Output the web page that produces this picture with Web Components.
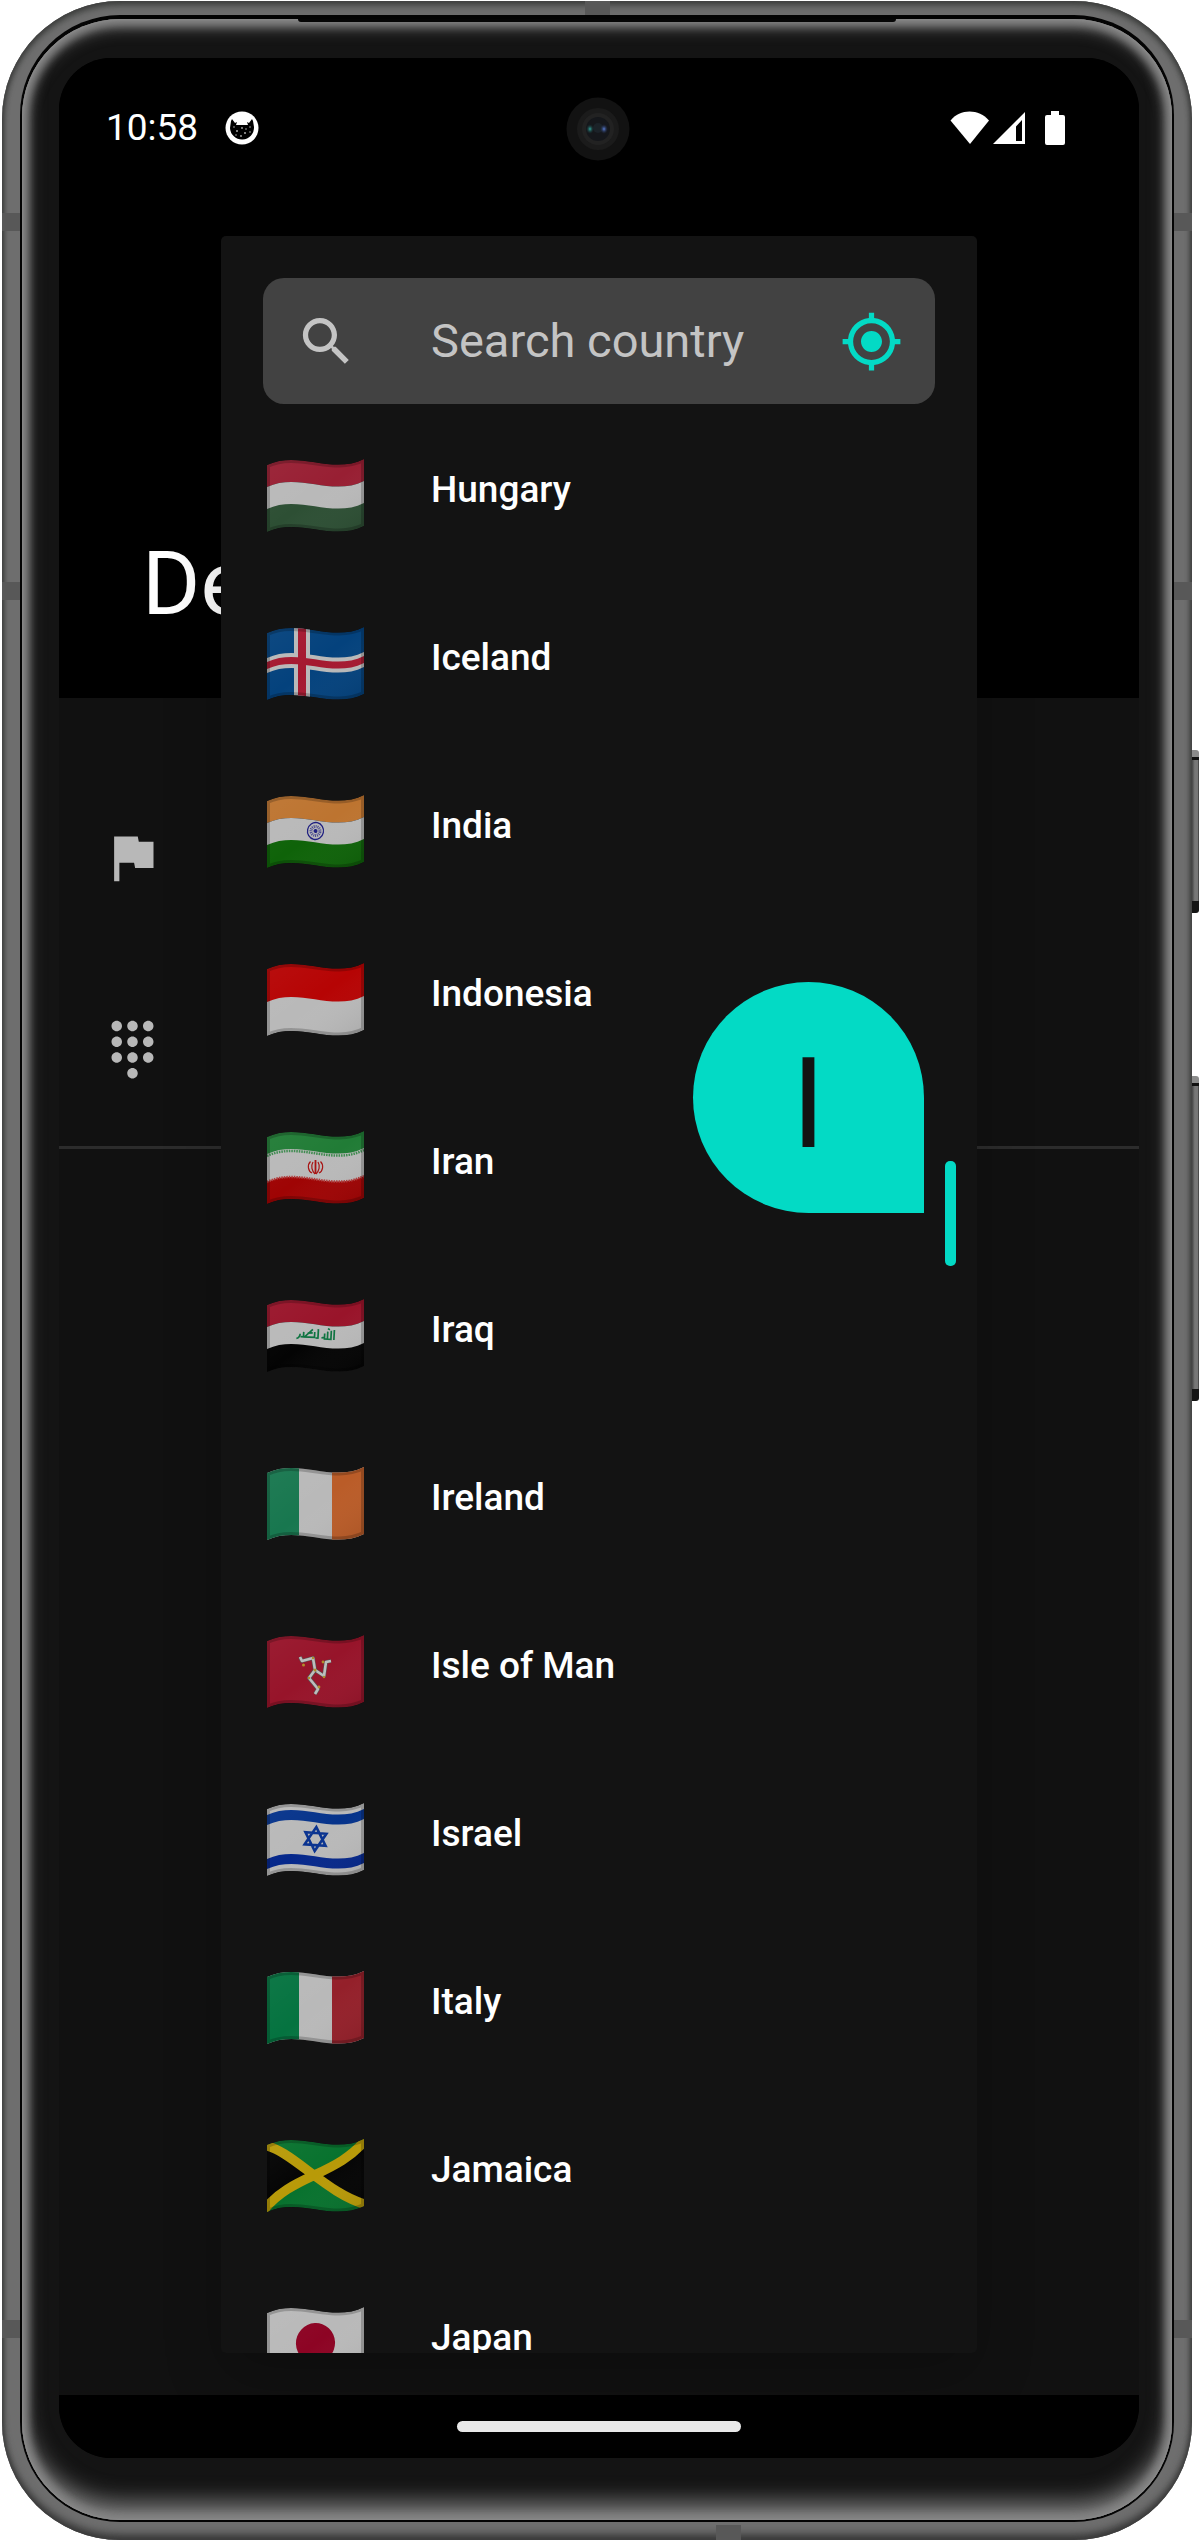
<!DOCTYPE html>
<html lang="en">
<head>
<meta charset="utf-8">
<meta name="viewport" content="width=device-width, initial-scale=1">
<title>Country picker</title>
<style>
  body { margin: 0; background: #fff; font-family: Roboto, "Noto Sans", sans-serif; color: #fff; }
</style>
</head>
<body>
<phone-frame>
  <app-screen></app-screen>
  <country-dialog></country-dialog>
</phone-frame>

<script>
const define = (name, html, init) => customElements.define(name, class extends HTMLElement {
  constructor() {
    super();
    this.attachShadow({ mode: "open" });
  }
  connectedCallback() {
    this.shadowRoot.innerHTML = html;
    if (init) init.call(this, this.shadowRoot);
  }
});

/* Device body: metal rim, black seam, glass bezel, screen */
define("phone-frame", `
<style>
  :host { display: block; height: 100vh; box-sizing: border-box; padding: 1px 8px 1px 2px; position: relative; }
  * { box-sizing: border-box; }
  .metal { height: 100%; padding: 14px 18px 18px; border-radius: 118px; position: relative;
    background: #6e6e6e;
    box-shadow: inset 0 0 5px 1px #3a3a3a, inset 0 -8px 8px -2px #3c3c3c, inset 0 5px 6px #4a4c4a; }
  .seam { height: 100%; padding: 4px 2px 2px; background: #040404; border-radius: 100px; position: relative; }
  .bezel { height: 100%; padding: 39px 33px 62px 37px; border-radius: 98px; background: #141414; position: relative;
    box-shadow: inset 0 0 2px 1px #8a8a8a, inset 0 0 9px 6px #858585, inset 0 8px 16px #6f6f6f, inset 0 -18px 22px #7a7a7a; }
  .earpiece { position: absolute; top: 0; left: 24%; right: 24%; height: 3px; background: #060606; border-radius: 0 0 3px 3px; }
  .screen { height: 100%; position: relative; overflow: hidden; border-radius: 52px; background: #000; }
  .band { position: absolute; background: #585858; }
  .side { width: 18px; height: 18px; }
  .l { left: 0; } .r { right: 0; }
  .end { height: 15px; width: 25px; }
  .key { position: absolute; right: 1px; width: 7px; border-radius: 0 3px 3px 0;
    background: linear-gradient(#8b8b8b 7px, #111 7px, #111 10px, transparent 10px, transparent calc(100% - 12px), #151515 calc(100% - 12px)),
      linear-gradient(90deg, #444, #777 40%, #777 80%, #333); }
  .camera { position: absolute; top: 39px; left: 50%; width: 64px; height: 64px; margin-left: -33px; }
</style>
<div class="metal">
  <div class="band side l" style="top:212px"></div>
  <div class="band side l" style="top:581px"></div>
  <div class="band side l" style="bottom:202px"></div>
  <div class="band side r" style="top:212px"></div>
  <div class="band side r" style="top:581px"></div>
  <div class="band side r" style="bottom:202px"></div>
  <div class="band end" style="top:0;left:49%"></div>
  <div class="band end" style="bottom:0;left:60%"></div>
  <div class="seam">
    <div class="bezel">
      <div class="earpiece"></div>
      <div class="screen">
        <slot></slot>
        <svg class="camera" viewBox="0 0 64 64" aria-hidden="true">
          <defs>
            <radialGradient id="a"><stop offset="0" stop-color="#2fa79e"/><stop offset="1" stop-color="#1a2a2c" stop-opacity="0"/></radialGradient>
            <radialGradient id="b"><stop offset="0" stop-color="#5a7fd8"/><stop offset="1" stop-color="#1c2440" stop-opacity="0"/></radialGradient>
          </defs>
          <circle cx="32" cy="32" r="31.500" fill="#121212"/>
          <circle cx="32" cy="32" r="21" fill="#1b1b1b"/>
          <circle cx="32" cy="32" r="16" fill="#222"/>
          <circle cx="32" cy="32" r="12" fill="#15171b"/>
          <circle cx="32" cy="31" r="5" fill="#1b2228"/>
          <ellipse cx="24" cy="32" rx="4" ry="5" fill="url(#a)"/>
          <ellipse cx="38" cy="32" rx="4" ry="5" fill="url(#b)"/>
        </svg>
      </div>
    </div>
  </div>
</div>
<div class="key" style="top:750px;height:163px"></div>
<div class="key" style="top:1076px;height:325px"></div>
`);

/* System status bar */
define("status-bar", `
<style>
  :host { display: flex; align-items: center; height: 140px; padding: 0 74px 0 47px; flex: none; }
  time { font-size: 37px; line-height: 44px; margin-right: 27px; }
  svg { display: block; fill: #fff; }
  .sys { margin-left: auto; display: flex; align-items: center; }
</style>
<time>10:58</time>
<svg width="34" height="34" viewBox="0 0 34 34" role="img" aria-label="Notification">
  <circle cx="17" cy="17" r="16.500"/>
  <path fill="#000" d="M6 10L7 8L10 12L12 11L11 14H23L22 11L24 12L27 8L28 10L29 16A12 12 0 0 1 5 17Z"/>
  <g fill="#aaa"><circle cx="9" cy="16" r=".8"/><circle cx="17" cy="17" r=".9"/><circle cx="25" cy="16" r=".8"/><circle cx="12" cy="20" r="1"/><circle cx="20" cy="22" r="1"/><circle cx="16" cy="25" r=".9"/><circle cx="25" cy="21" r=".8"/><circle cx="11" cy="24" r=".8"/><circle cx="21" cy="18" r=".8"/></g>
</svg>
<div class="sys">
  <svg width="117" height="34" viewBox="0 0 117 34" role="img" aria-label="Wi-Fi, signal and battery">
    <path d="M2.500 9.500C12-2.500 31-2.500 41 9.500L22 33Z"/>
    <path fill-rule="evenodd" d="M45 33L77 1V33ZM68 15.500V30H74V9Z"/>
    <path d="M103 0H111V4H115Q117 4 117 6V32Q117 34 115 34H99Q97 34 97 32V6Q97 4 99 4H103Z"/>
  </svg>
</div>
`);

/* Page beneath the dialog */
define("app-screen", `
<style>
  :host { display: flex; flex-direction: column; height: 100%; }
  header { height: 640px; background: #000; display: flex; flex-direction: column; flex: none; }
  h1 { margin: auto 0 0; padding: 0 83px 62px; font-size: 89px; line-height: 104px; font-weight: 400; }
  main { flex: 1; background: #111; }
  .fields { display: flex; flex-direction: column; gap: 129px; padding: 128px 42px 65px; border-bottom: 3px solid #2c2c2c; }
  svg { display: block; width: 63px; height: 63px; fill: #b8b8b8; }
  footer { flex: none; height: 63px; background: #000; display: flex; align-items: center; justify-content: center; position: relative; z-index: 2; }
  .pill { width: 284px; height: 11px; border-radius: 6px; background: #e8e8e8; }
  @media (max-width: 700px) { .pill { width: 40%; } }
</style>
<header><status-bar></status-bar><h1>De</h1></header>
<main>
  <div class="fields">
    <svg viewBox="0 0 24 24" role="img" aria-label="Country"><path d="M14.400 6L14 4H5v17h2v-7h5.600l.4 2h7V6z"/></svg>
    <svg viewBox="0 0 24 24" role="img" aria-label="Phone number"><path d="M12 19c-1.100 0-2 .9-2 2s.9 2 2 2 2-.9 2-2-.9-2-2-2zM6 1c-1.100 0-2 .9-2 2s.9 2 2 2 2-.9 2-2-.9-2-2-2zm0 6c-1.100 0-2 .9-2 2s.9 2 2 2 2-.9 2-2-.9-2-2-2zm0 6c-1.100 0-2 .9-2 2s.9 2 2 2 2-.9 2-2-.9-2-2-2zm12-8c1.100 0 2-.9 2-2s-.9-2-2-2-2 .9-2 2 .9 2 2 2zm-6 8c-1.100 0-2 .9-2 2s.9 2 2 2 2-.9 2-2-.9-2-2-2zm6 0c-1.100 0-2 .9-2 2s.9 2 2 2 2-.9 2-2-.9-2-2-2zm0-6c-1.100 0-2 .9-2 2s.9 2 2 2 2-.9 2-2-.9-2-2-2zm-6 0c-1.100 0-2 .9-2 2s.9 2 2 2 2-.9 2-2-.9-2-2-2zm0-6c-1.100 0-2 .9-2 2s.9 2 2 2 2-.9 2-2-.9-2-2-2z"/></svg>
  </div>
</main>
<footer><div class="pill"></div></footer>
`);

/* Waving flags: every horizontal band follows the same wave */
const wave = (a, b, fill) => `<path fill="${fill}" d="M0 ${a + 6}C32 ${a - 9} 65 ${a + 16} 97 ${a}V${b}C65 ${b + 16} 32 ${b - 9} 0 ${b + 6}Z"/>`;
const bars = (l, c, r) => `<path fill="${c}" d="M0 0H97V73H0Z"/><path fill="${l}" d="M0 0H32V73H0Z"/><path fill="${r}" d="M65 0H97V73H65Z"/>`;
const W = "#b9b9b9";
const leg = d => `<path d="${d}" fill="none" stroke="#555" stroke-width="3.800" stroke-linejoin="round"/><path d="${d}" fill="none" stroke="#bdbdbd" stroke-width="2.600" stroke-linejoin="round"/>`;
const flags = {
  hu: wave(0, 22, "#981f33") + wave(22, 45, W) + wave(44, 67, "#2d4f34"),
  is: wave(0, 67, "#04427d") + wave(25, 40, W) + `<path fill="${W}" d="M27 0H43V73H27Z"/>` + wave(29, 36, "#a51930") + `<path fill="#a51930" d="M31 0H39V73H31Z"/>`,
  in: wave(0, 22, "#bd7430") + wave(22, 45, W) + wave(44, 67, "#0f6309") +
    `<g transform="rotate(12 48.500 36)"><ellipse cx="48.500" cy="36" rx="8" ry="8.500" fill="none" stroke="#1f1f80" stroke-width="1.300"/><circle cx="48.500" cy="36" r="4.500" fill="none" stroke="#1f1f80" stroke-width="3" stroke-dasharray="1 .8" opacity=".7"/><circle cx="48.500" cy="36" r="2" fill="#1f1f80"/></g>`,
  id: wave(0, 34, "#b60404") + wave(33, 67, W),
  ir: wave(0, 19, "#217c36") + wave(17, 49, W) + wave(45, 67, "#9f0404") +
    `<path d="M0 25C32 10 65 35 97 19" fill="none" stroke="#3d8a4e" stroke-width="2.500" stroke-dasharray="1.500 1"/><path d="M0 51C32 36 65 61 97 45" fill="none" stroke="#b03a3a" stroke-width="2.500" stroke-dasharray="1.500 1"/>
    <g fill="none" stroke="#a81414" stroke-width="1.200"><path stroke-width="1.800" d="M48.500 29V43"/><path d="M43.500 30.500C40 34 41 40 45 42M53.500 30.500C57 34 56 40 52 42M46 31C43.500 35 45 40 48 43M51 31C53.500 35 52 40 49 43"/></g>`,
  iq: wave(0, 22, "#99142a") + wave(22, 45, W) + wave(44, 67, "#040404") +
    `<g transform="translate(30 28) rotate(3)" fill="none" stroke="#0e7340" stroke-width="1.700"><path d="M37.500 1V11M34.500 2V10.500H28V5M31 3V10M28 9L25 9.500M33 1L31 0"/><path d="M21.500 1V10.500M22 10H19M18 4V9.500H8L16 1.500M11 5.500L16 5M7 4.500V9.500H4M3.500 6.500Q3.500 10 0 11.500"/></g>`,
  ie: bars("#18774f", W, "#ba5c28"),
  im: wave(0, 67, "#97142a") +
    leg("M48 35L46 23L35 26L33 22") + leg("M48 35L57 41L59 27L64 26") + leg("M48 35L42 43L51 54L48 59") +
    `<g fill="#b08d2a"><circle cx="36.500" cy="30" r="1.500"/><circle cx="56" cy="27" r="1.400"/><circle cx="52" cy="52" r="1.400"/><circle cx="42" cy="43" r="1.200"/><circle cx="57" cy="42" r="1.200"/><circle cx="46" cy="23" r="1.200"/><circle cx="48" cy="35" r="1.500"/></g>`,
  il: wave(0, 67, W) + wave(6, 16, "#06338b") + wave(50, 60, "#06288b") +
    `<path transform="rotate(4 48 36)" d="M48.500 24L59 42H38ZM48.500 48L59 30H38Z" fill="none" stroke="#0a3390" stroke-width="2.600"/>`,
  it: bars("#057340", W, "#94202a"),
  jm: wave(0, 67, "#08722e") + `<path fill="#040404" d="M0 10Q20 17 43 37Q20 46 0 66ZM97 6Q78 27 53 37Q78 58 97 62Z"/>
    <path fill="none" stroke="#b89a08" stroke-width="9.500" d="M-4 6C24 10 60 56 101 66M-4 72C26 34 70 38 101 -2"/>`,
  jp: wave(0, 67, W) + `<ellipse cx="48.500" cy="36" rx="19.500" ry="20" fill="#8d0424" transform="rotate(20 48.500 36)"/>`
};

/* One selectable country */
define("country-row", `
<style>
  :host { display: block; }
  button { all: unset; box-sizing: border-box; display: flex; align-items: flex-start; width: 100%; height: 168px;
    padding: 55px 42px 0 46px; gap: 67px; cursor: pointer; }
  svg { display: block; flex: none; width: 97px; height: 73px; }
  span { font-size: 37px; line-height: 62px; font-weight: 500; }
</style>
<button type="button"><svg viewBox="0 0 97 73" aria-hidden="true"></svg><span><slot></slot></span></button>
`, function (root) {
  root.querySelector("svg").innerHTML = `
    <defs>
      <clipPath id="c"><path d="M0 6C32 -9 65 16 97 0V67C65 83 32 58 0 73Z"/></clipPath>
      <linearGradient id="g" x2="1" y2="1"><stop offset="0" stop-color="#fff" stop-opacity=".04"/><stop offset=".5" stop-color="#fff" stop-opacity="0"/><stop offset="1" stop-opacity=".08"/></linearGradient>
    </defs>
    <g clip-path="url(#c)">${flags[this.getAttribute("code")]}
      <path fill="url(#g)" d="M0 0H97V73H0Z"/>
      <path d="M0 6C32 -9 65 16 97 0V67C65 83 32 58 0 73Z" fill="none" stroke="#000" stroke-opacity=".2" stroke-width="6"/>
    </g>`;
});

/* Search box with locate action */
define("search-field", `
<style>
  :host { display: flex; align-items: center; height: 126px; flex: none; margin: 0 42px; padding: 0 32px;
    box-sizing: border-box; border-radius: 21px; background: #424242; }
  svg { display: block; width: 63px; height: 63px; flex: none; }
  label { margin-right: 73px; fill: #c4c4c4; }
  input { all: unset; flex: 1; min-width: 0; font: 400 47px/56px Roboto, "Noto Sans", sans-serif; color: #fff; }
  input::placeholder { color: #c4c4c4; opacity: 1; }
  button { all: unset; cursor: pointer; fill: #03dac5; }
</style>
<label for="q" aria-label="Search"><svg viewBox="0 0 24 24"><path d="M15.500 14h-.79l-.28-.27C15.410 12.590 16 11.110 16 9.500 16 5.910 13.090 3 9.500 3S3 5.910 3 9.500 5.910 16 9.500 16c1.610 0 3.090-.59 4.230-1.570l.27.28v.79l5 4.990L20.490 19l-4.990-5zm-6 0C7.010 14 5 11.990 5 9.500S7.010 5 9.500 5 14 7.010 14 9.500 11.990 14 9.500 14z"/></svg></label>
<input id="q" type="text" placeholder="Search country">
<button type="button" aria-label="Use my location"><svg viewBox="0 0 24 24"><path d="M12 8c-2.210 0-4 1.790-4 4s1.790 4 4 4 4-1.790 4-4-1.790-4-4-4zm8.940 3c-.46-4.170-3.770-7.480-7.940-7.940V1h-2v2.060C6.830 3.520 3.520 6.830 3.060 11H1v2h2.060c.46 4.170 3.770 7.480 7.940 7.940V23h2v-2.060c4.170-.46 7.480-3.770 7.940-7.940H23v-2h-2.060zM12 19c-3.870 0-7-3.130-7-7s3.130-7 7-7 7 3.130 7 7-3.130 7-7 7z"/></svg></button>
`);

const countries = [["hu", "Hungary"], ["is", "Iceland"], ["in", "India"], ["id", "Indonesia"], ["ir", "Iran"], ["iq", "Iraq"],
  ["ie", "Ireland"], ["im", "Isle of Man"], ["il", "Israel"], ["it", "Italy"], ["jm", "Jamaica"], ["jp", "Japan"]];

define("country-dialog", `
<style>
  :host { position: absolute; inset: 178px 15% 105px; z-index: 1; display: flex; flex-direction: column;
    box-sizing: border-box; padding-top: 42px; overflow: hidden; border-radius: 5px; background: #131313;
    box-shadow: 0 24px 60px rgba(0, 0, 0, .2); }
  .list { flex: 1; min-height: 0; overflow: hidden; }
  .thumb { position: absolute; right: 21px; top: 925px; width: 11px; height: 105px; border-radius: 5px; background: #03dac5; }
  .bubble { position: absolute; right: 53px; top: 746px; box-sizing: border-box; width: 231px; height: 231px; padding-top: 14px;
    border-radius: 50% 50% 0 50%; background: #03dac5; color: #131313; font-size: 126px; line-height: 217px; text-align: center; }
</style>
<search-field></search-field>
<div class="list">${countries.map(([c, n]) => `<country-row code="${c}">${n}</country-row>`).join("")}</div>
<div class="bubble">I</div>
<div class="thumb"></div>
`);
</script>
</body>
</html>
